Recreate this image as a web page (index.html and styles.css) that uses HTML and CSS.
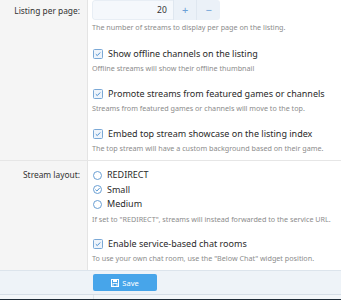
FILE: index.html
```html
<!DOCTYPE html>
<html>
<head>
<meta charset="utf-8">
<link rel="stylesheet" href="styles.css">
</head>
<body>
<div class="form">
  <div class="row row-first">
    <div class="label"><span class="label-text lbl-input">Listing per page:</span></div>
    <div class="controls">
      <div class="spinbox">
        <div class="spin-input">20</div>
        <div class="spin-btn">+</div>
        <div class="spin-btn">−</div>
      </div>
      <div class="hint">The number of streams to display per page on the listing.</div>
      <div class="check gap-a"><span class="box"><svg viewBox="0 0 8 8" width="8" height="8"><path d="M1.8 4.2 L3.3 5.6 L6.2 2.5" fill="none" stroke="#4b8fcf" stroke-width="1"/></svg></span>Show offline channels on the listing</div>
      <div class="hint">Offline streams will show their offline thumbnail</div>
      <div class="check gap-b"><span class="box"><svg viewBox="0 0 8 8" width="8" height="8"><path d="M1.8 4.2 L3.3 5.6 L6.2 2.5" fill="none" stroke="#4b8fcf" stroke-width="1"/></svg></span>Promote streams from featured games or channels</div>
      <div class="hint">Streams from featured games or channels will move to the top.</div>
      <div class="check gap-b"><span class="box"><svg viewBox="0 0 8 8" width="8" height="8"><path d="M1.8 4.2 L3.3 5.6 L6.2 2.5" fill="none" stroke="#4b8fcf" stroke-width="1"/></svg></span>Embed top stream showcase on the listing index</div>
      <div class="hint">The top stream will have a custom background based on their game.</div>
    </div>
  </div>
  <div class="row row-second">
    <div class="label"><span class="label-text lbl-radio">Stream layout:</span></div>
    <div class="controls">
      <div class="radio"><span class="circle"></span>REDIRECT</div>
      <div class="radio"><span class="circle"><svg viewBox="0 0 9 9" width="9" height="9"><path d="M2.4 4.6 L3.9 6 L6.6 3.1" fill="none" stroke="#4b8fcf" stroke-width="1"/></svg></span>Small</div>
      <div class="radio"><span class="circle"></span>Medium</div>
      <div class="hint">If set to "REDIRECT", streams will instead forwarded to the service URL.</div>
      <div class="check gap-c"><span class="box"><svg viewBox="0 0 8 8" width="8" height="8"><path d="M1.8 4.2 L3.3 5.6 L6.2 2.5" fill="none" stroke="#4b8fcf" stroke-width="1"/></svg></span>Enable service-based chat rooms</div>
      <div class="hint">To use your own chat room, use the "Below Chat" widget position.</div>
    </div>
  </div>
  <div class="footer">
    <div class="footer-spacer"></div>
    <div class="footer-controls">
      <div class="save-btn"><svg class="save-icon" viewBox="0 0 8 8" width="8" height="8"><rect x="0.5" y="0.5" width="7" height="7" fill="none" stroke="#fff" stroke-width="1"/><rect x="2" y="0.5" width="4" height="2.5" fill="#fff"/><rect x="2" y="4.5" width="4" height="3" fill="none" stroke="#fff" stroke-width="0.8"/></svg>Save</div>
    </div>
  </div>
  <div class="footer-under">
    <div class="under-left"></div>
    <div class="under-right"></div>
  </div>
  <div class="darkbar"></div>
</div>
</body>
</html>
```
FILE: styles.css
```css
html, body {
  margin: 0;
  padding: 0;
  background: #ffffff;
}
body {
  font-family: "Noto Sans", "Open Sans", sans-serif;
  color: #222;
  width: 341px;
  height: 300px;
  overflow: hidden;
}
.form {
  display: flex;
  flex-direction: column;
}
.row {
  display: flex;
}
.row-first {
  margin-top: -1px;
}
.row-second {
  border-top: 1px solid #e6e6e6;
}
.label {
  width: 88px;
  flex: none;
  background: #f5f5f5;
  border-right: 1px solid #e4e4e4;
  text-align: right;
  box-sizing: border-box;
  padding-right: 7px;
  font-size: 8.4px;
  color: #333;
}
.label-text {
  display: block;
  line-height: 14px;
}
.lbl-input {
  padding-top: 5px;
}
.lbl-radio {
  padding-top: 7px;
}
.controls {
  flex: 1;
  padding-left: 4px;
}
.row-first .controls {
  padding-top: 1px;
  padding-bottom: 5px;
}
.row-second .controls {
  padding-top: 7px;
  padding-bottom: 5px;
}
.spinbox {
  display: flex;
  width: 128px;
  height: 20px;
  border-radius: 3px;
  overflow: hidden;
}
.spin-input {
  width: 82px;
  background: #f5f8fc;
  border: 1px solid #e8eef5;
  border-right: none;
  box-sizing: border-box;
  text-align: right;
  padding-right: 6px;
  font-size: 8.5px;
  line-height: 18px;
  color: #333;
  border-radius: 3px 0 0 3px;
}
.spin-btn {
  width: 23px;
  background: #ebf1f8;
  color: #6a9fd6;
  text-align: center;
  font-size: 11px;
  line-height: 20px;
  border-left: 1px solid #dfe7f0;
}
.hint {
  font-size: 7.2px;
  color: #8c8c8c;
  line-height: 14px;
}
.check, .radio {
  display: flex;
  align-items: center;
  font-size: 9px;
  line-height: 14px;
  color: #2a2a2a;
}
.check.gap-a { margin-top: 13px; }
.check.gap-b { margin-top: 12px; }
.check.gap-c { margin-top: 11.5px; }
.radio { line-height: 14.5px; }
.box {
  width: 8px;
  height: 8px;
  border: 1px solid #7aa8d6;
  border-radius: 1.5px;
  background: #eef4fb;
  margin-left: 1px;
  margin-right: 5px;
  display: flex;
  align-items: center;
  justify-content: center;
  box-sizing: content-box;
}
.box svg { display: block; }
.circle {
  width: 7px;
  height: 7px;
  border: 1px solid #6a9fd3;
  border-radius: 50%;
  margin-left: 1px;
  margin-right: 5px;
  display: flex;
  align-items: center;
  justify-content: center;
  overflow: hidden;
}
.circle svg { display: block; flex: none; }
.footer {
  display: flex;
  height: 23px;
  border-top: 1px solid #dce4ec;
  border-bottom: 1px solid #d6dee7;
  background: #eef3f8;
  box-sizing: content-box;
}
.footer-spacer {
  width: 88px;
  flex: none;
}
.footer-controls {
  padding-left: 5px;
  padding-top: 3px;
}
.save-btn {
  width: 64px;
  height: 17px;
  background: #47a5ea;
  border-radius: 2px;
  color: #fff;
  font-size: 7.5px;
  display: flex;
  align-items: center;
  justify-content: center;
  gap: 3px;
}
.save-icon { display: block; }
.footer-under {
  display: flex;
  height: 4px;
  background: #f3f6f9;
}
.under-left {
  width: 93px;
  border-right: 1px solid #e0e6ec;
}
.darkbar {
  height: 4px;
  background: #1e2b38;
}
```
